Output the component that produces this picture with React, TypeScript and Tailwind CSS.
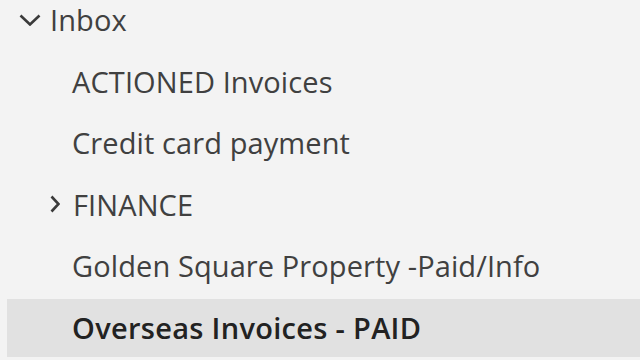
import React from 'react';

interface FolderRowProps {
    label: string;
    indent: number;
    chevron?: 'down' | 'right';
    selected?: boolean;
}

function ChevronDown() {
    return (
        <svg width="22" height="12" viewBox="0 0 22 12" className="shrink-0">
            <path d="M1.5 1.5 L11 10.5 L20.5 1.5" fill="none" stroke="#3a3a3a" strokeWidth="2.6" />
        </svg>
    );
}

function ChevronRight() {
    return (
        <svg width="10" height="18" viewBox="0 0 10 18" className="shrink-0">
            <path d="M1.5 1.5 L8.5 9 L1.5 16.5" fill="none" stroke="#3a3a3a" strokeWidth="2.6" />
        </svg>
    );
}

function FolderRow({ label, indent, chevron, selected }: FolderRowProps) {
    return (
        <div className="h-[61.6px] flex flex-col justify-end">
            <div
                className={
                    selected
                        ? 'h-[58px] ml-[7px] bg-[#e1e1e1] flex items-center'
                        : 'h-[58px] ml-[7px] flex items-center'
                }
            >
                <div className="flex items-center" style={{ paddingLeft: indent }}>
                    {chevron === 'down' && (
                        <span className="w-[31px] flex items-center">
                            <ChevronDown />
                        </span>
                    )}
                    {chevron === 'right' && (
                        <span className="w-[23px] flex items-center">
                            <ChevronRight />
                        </span>
                    )}
                    <span
                        className={
                            selected
                                ? 'text-[29px] font-semibold text-[#222] leading-none tracking-[0.3px]'
                                : 'text-[29px] text-[#404040] leading-none tracking-[0.1px]'
                        }
                    >
                        {label}
                    </span>
                </div>
            </div>
        </div>
    );
}

export default function App() {
    return (
        <div
            className="w-[640px] h-[360px] overflow-hidden bg-[#f3f3f3]"
            style={{ fontFamily: '"Open Sans", "Noto Sans", sans-serif' }}
        >
            <div className="-mt-[13px]">
                <FolderRow label="Inbox" indent={12} chevron="down" />
                <FolderRow label="ACTIONED Invoices" indent={65} />
                <FolderRow label="Credit card payment" indent={65} />
                <FolderRow label="FINANCE" indent={43} chevron="right" />
                <FolderRow label="Golden Square Property -Paid/Info" indent={65} />
                <FolderRow label="Overseas Invoices - PAID" indent={65} selected />
            </div>
        </div>
    );
}
